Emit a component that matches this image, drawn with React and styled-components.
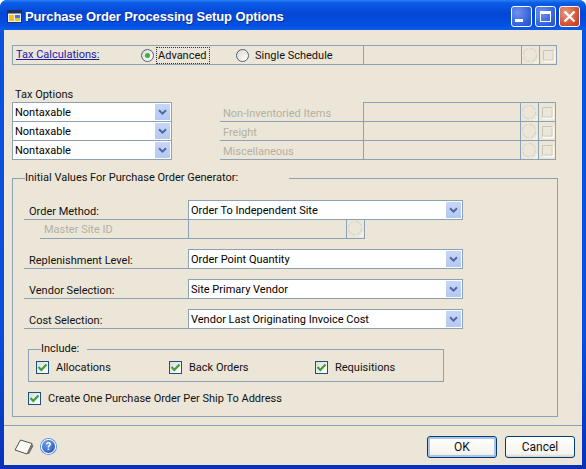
import styled, { createGlobalStyle } from 'styled-components'

const GlobalStyle = createGlobalStyle`
  html, body {
    margin: 0;
    padding: 0;
    background: #fff;
  }
  * {
    box-sizing: border-box;
  }
`

const LINE = '#8aa2b4'
const DISABLED = '#b4b0a2'

//* Little drawings
const Chevron = () => (
  <svg width='9' height='7' viewBox='0 0 9 7'>
    <path d='M1 1.2 L4.5 4.7 L8 1.2' fill='none' stroke='#4d6a9c' strokeWidth='2' />
  </svg>
)

const LookupGlyph = () => (
  <svg width='17' height='17' viewBox='0 0 17 17'>
    <circle cx='8' cy='8' r='6.5' fill='none' stroke='#d6d2c3' strokeWidth='1' strokeDasharray='8 2' />
    <path d='M12 16 H16 V12' fill='none' stroke='#fbfaf5' strokeWidth='1' />
  </svg>
)

const NoteGlyph = () => (
  <svg width='15' height='15' viewBox='0 0 15 15'>
    <path d='M2.5 12.5 V2.5 H12.5' fill='none' stroke='#c9c5b6' strokeWidth='1' />
    <path d='M2.5 13.5 H13.5 V2.5' fill='none' stroke='#fbfaf5' strokeWidth='1.4' />
    <path d='M3.5 12 H12 V3.5' fill='none' stroke='#d2cebf' strokeWidth='1' />
  </svg>
)

const Tick = () => (
  <svg width='11' height='9' viewBox='0 0 11 9'>
    <path d='M1.5 4 L4.3 7 L9.5 1.5' fill='none' stroke='#3f9c3f' strokeWidth='2.2' />
  </svg>
)

const AppIcon = () => (
  <svg width='15' height='13' viewBox='0 0 15 13'>
    <rect x='0.5' y='0.5' width='14' height='12' fill='#eef1f4' stroke='#26304f' />
    <rect x='0.5' y='0.5' width='14' height='3' fill='#26304f' />
    <rect x='2' y='5' width='5' height='6' fill='#f3c317' />
    <rect x='8' y='5' width='5' height='3' fill='#3f78d8' />
    <rect x='8' y='8' width='5' height='3' fill='#f3c317' />
  </svg>
)

const NotePad = () => (
  <svg width='20' height='16' viewBox='0 0 20 16'>
    <path d='M1 11 L6.5 1 L18 4.5 L13 15 Z' fill='#fbfbf6' stroke='#55544c' strokeWidth='1' />
    <path d='M13 15 L18 4.5 L19.5 7 L15 15 Z' fill='#77766c' />
  </svg>
)

//* Small parts
const Combo = ({ children }) => (
  <ComboBox>
    <ComboText>{children}</ComboText>
    <ArrowButton>
      <Chevron />
    </ArrowButton>
  </ComboBox>
)

const Check = ({ children }) => (
  <CheckLabel>
    <CheckBox>
      <Tick />
    </CheckBox>
    {children}
  </CheckLabel>
)

const DisabledRow = ({ children }) => (
  <OptionRow>
    <OptionLabel>{children}</OptionLabel>
    <OptionBox $framed>
      <LookupCell>
        <LookupGlyph />
      </LookupCell>
      <NoteCell>
        <NoteGlyph />
      </NoteCell>
    </OptionBox>
  </OptionRow>
)

const App = () => {
  return (
    <>
      <GlobalStyle />
      <Window>
        <TitleBar>
          <AppIcon />
          <TitleText>Purchase Order Processing Setup Options</TitleText>
          <WindowButtons>
            <WindowButton>
              <MinimizeMark />
            </WindowButton>
            <WindowButton>
              <MaximizeMark />
            </WindowButton>
            <WindowButton $close>
              <svg width='13' height='13' viewBox='0 0 13 13'>
                <path d='M1.5 1.5 L11.5 11.5 M11.5 1.5 L1.5 11.5' stroke='#fff' strokeWidth='2.4' />
              </svg>
            </WindowButton>
          </WindowButtons>
        </TitleBar>
        <Client>
          <TaxCalcRow>
            <TaxCalcLink>Tax Calculations:</TaxCalcLink>
            <RadioGroup>
              <RadioLabel>
                <Radio $checked />
                <FocusText>Advanced</FocusText>
              </RadioLabel>
              <RadioLabel $second>
                <Radio />
                <PlainText>Single Schedule</PlainText>
              </RadioLabel>
            </RadioGroup>
            <OptionBox>
              <LookupCell>
                <LookupGlyph />
              </LookupCell>
              <NoteCell>
                <NoteGlyph />
              </NoteCell>
            </OptionBox>
          </TaxCalcRow>

          <TaxOptions>
            <TaxColumn>
              <TaxHeading>Tax Options</TaxHeading>
              <Combo>Nontaxable</Combo>
              <Combo>Nontaxable</Combo>
              <Combo>Nontaxable</Combo>
            </TaxColumn>
            <TaxRight>
              <DisabledRow>Non-Inventoried Items</DisabledRow>
              <DisabledRow>Freight</DisabledRow>
              <DisabledRow>Miscellaneous</DisabledRow>
            </TaxRight>
          </TaxOptions>

          <Group>
            <GroupLegend>Initial Values For Purchase Order Generator:</GroupLegend>
            <FormRow>
              <FormLabel>Order Method:</FormLabel>
              <Combo>Order To Independent Site</Combo>
            </FormRow>
            <MasterRow>
              <MasterLabel>Master Site ID</MasterLabel>
              <MasterBox>
                <LookupCell>
                  <LookupGlyph />
                </LookupCell>
              </MasterBox>
            </MasterRow>
            <FormRow $spaced>
              <FormLabel>Replenishment Level:</FormLabel>
              <Combo>Order Point Quantity</Combo>
            </FormRow>
            <FormRow $spaced>
              <FormLabel>Vendor Selection:</FormLabel>
              <Combo>Site Primary Vendor</Combo>
            </FormRow>
            <FormRow $spaced>
              <FormLabel>Cost Selection:</FormLabel>
              <Combo>Vendor Last Originating Invoice Cost</Combo>
            </FormRow>
            <IncludeGroup>
              <IncludeLegend>Include:</IncludeLegend>
              <IncludeRow>
                <Check>Allocations</Check>
                <Check>Back Orders</Check>
                <Check>Requisitions</Check>
              </IncludeRow>
            </IncludeGroup>
            <CreateRow>
              <Check>Create One Purchase Order Per Ship To Address</Check>
            </CreateRow>
          </Group>

          <Footer>
            <FooterIcons>
              <NotePad />
              <HelpIcon>?</HelpIcon>
            </FooterIcons>
            <FooterButtons>
              <DialogButton $default>OK</DialogButton>
              <DialogButton>Cancel</DialogButton>
            </FooterButtons>
          </Footer>
        </Client>
      </Window>
    </>
  )
}

const Window = styled.div`
  width: 586px;
  height: 469px;
  display: flex;
  flex-direction: column;
  overflow: hidden;
  border-radius: 7px 7px 0 0;
  background: linear-gradient(180deg, #0a52e0 0%, #0a4fdc 70%, #0831b8 100%);
  font-family: Roboto, 'Liberation Sans', Arial, sans-serif;
  font-size: 11px;
  color: #111;
`
const TitleBar = styled.div`
  height: 30px;
  flex: none;
  display: flex;
  align-items: center;
  padding: 2px 6px 0 7px;
  background: linear-gradient(180deg, #2a7ff0 0%, #0a5ce6 10%, #0346d6 45%, #0550e2 85%, #0a5ee8 100%);
`
const TitleText = styled.div`
  margin-left: 3px;
  color: #fff;
  font-family: 'Liberation Sans', Arial, sans-serif;
  font-size: 13px;
  font-weight: 700;
  letter-spacing: -0.13px;
  white-space: nowrap;
  text-shadow: 1px 1px 0 #0a2f9c;
`
const WindowButtons = styled.div`
  margin-left: auto;
  display: flex;
  gap: 3px;
`
const WindowButton = styled.div`
  width: 21px;
  height: 21px;
  display: flex;
  align-items: center;
  justify-content: center;
  border: 1px solid #fff;
  border-radius: 3px;
  background: ${(props) =>
    props.$close
      ? 'radial-gradient(circle at 30% 30%, #e8987c, #d4492b 70%, #b93a1e)'
      : 'radial-gradient(circle at 30% 30%, #6f93ec, #2f5fdc 70%, #2350c8)'};
`
const MinimizeMark = styled.div`
  width: 8px;
  height: 3px;
  background: #fff;
  margin: 8px 5px 0 0;
`
const MaximizeMark = styled.div`
  width: 11px;
  height: 11px;
  border: 1px solid #fff;
  border-top-width: 3px;
`
const Client = styled.div`
  flex: none;
  height: 435px;
  margin: 0 4px;
  padding: 15px 0 0 8px;
  background: #ece6d8;
  display: flex;
  flex-direction: column;
`
const TaxCalcRow = styled.div`
  width: 545px;
  height: 20px;
  display: flex;
  border: 1px solid ${LINE};
`
const TaxCalcLink = styled.a`
  width: 128px;
  padding: 2px 0 0 3px;
  color: #1a1aa6;
  text-decoration: underline;
`
const RadioGroup = styled.div`
  width: 222px;
  display: flex;
  align-items: center;
`
const RadioLabel = styled.div`
  display: flex;
  align-items: center;
  gap: 3px;
  margin-left: ${(props) => (props.$second ? '27px' : '0')};
`
const Radio = styled.span`
  width: 13px;
  height: 13px;
  border-radius: 50%;
  border: 1px solid #4d6185;
  display: flex;
  align-items: center;
  justify-content: center;
  background: linear-gradient(135deg, #dcd8ca, #fff);
  &::after {
    content: '';
    display: ${(props) => (props.$checked ? 'block' : 'none')};
    width: 5px;
    height: 5px;
    border-radius: 50%;
    background: #3fae3f;
  }
`
const FocusText = styled.span`
  width: 52px;
  padding: 1px 0 1px 1px;
  outline: 1px dotted #333;
  white-space: nowrap;
`
const PlainText = styled.span`
  margin-left: 3px;
  white-space: nowrap;
`
const OptionBox = styled.div`
  flex: 1;
  display: flex;
  justify-content: flex-end;
  border-left: 1px solid ${LINE};
  ${(props) =>
    props.$framed &&
    `
    border: 1px solid ${LINE};
  `}
`
const LookupCell = styled.div`
  width: 18px;
  display: flex;
  align-items: center;
  justify-content: center;
  border-left: 1px solid ${LINE};
`
const NoteCell = styled.div`
  width: 17px;
  display: flex;
  align-items: center;
  justify-content: center;
  border-left: 1px solid ${LINE};
`
const TaxOptions = styled.div`
  width: 545px;
  margin-top: 22px;
  display: flex;
  align-items: flex-end;
`
const TaxColumn = styled.div`
  width: 160px;
  flex: none;
`
const TaxHeading = styled.div`
  height: 15px;
  padding: 1px 0 0 3px;
`
const ComboBox = styled.div`
  height: 20px;
  display: flex;
  align-items: center;
  border: 1px solid ${LINE};
  background: #fff;
  & + & {
    margin-top: -1px;
  }
`
const ComboText = styled.div`
  flex: 1;
  padding-left: 2px;
  color: #000;
  white-space: nowrap;
`
const ArrowButton = styled.div`
  width: 15px;
  height: 16px;
  margin-right: 1px;
  display: flex;
  align-items: center;
  justify-content: center;
  background: linear-gradient(180deg, #c6d6f8, #b4c8f2);
`
const TaxRight = styled.div`
  width: 336px;
  margin-left: 48px;
  flex: none;
`
const OptionRow = styled.div`
  height: 20px;
  display: flex;
  & + & {
    margin-top: -1px;
  }
`
const OptionLabel = styled.div`
  width: 143px;
  flex: none;
  padding: 5px 0 0 3px;
  color: ${DISABLED};
  border-bottom: 1px solid ${LINE};
  white-space: nowrap;
`
const Group = styled.fieldset`
  width: 546px;
  height: 246px;
  margin: 11px 0 0;
  padding: 15px 0 0 11px;
  min-width: 0;
  border: 1px solid ${LINE};
`
const GroupLegend = styled.legend`
  margin-left: 1px;
  padding: 0 51px 0 0;
  height: 14px;
`
const FormRow = styled.div`
  width: 439px;
  height: 20px;
  display: flex;
  margin-top: ${(props) => (props.$spaced ? '10px' : '0')};
  ${ComboBox} {
    width: 275px;
    flex: none;
  }
`
const FormLabel = styled.div`
  width: 164px;
  flex: none;
  padding: 5px 0 0 5px;
  border-bottom: 1px solid ${LINE};
`
const MasterRow = styled.div`
  width: 325px;
  height: 20px;
  margin: -1px 0 0 16px;
  display: flex;
`
const MasterLabel = styled.div`
  width: 148px;
  flex: none;
  padding: 4px 0 0 4px;
  color: ${DISABLED};
  border-bottom: 1px solid ${LINE};
`
const MasterBox = styled.div`
  flex: 1;
  display: flex;
  justify-content: flex-end;
  border: 1px solid ${LINE};
  border-top: none;
`
const IncludeGroup = styled.fieldset`
  width: 416px;
  height: 40px;
  margin: 13px 0 0 4px;
  padding: 5px 0 0 7px;
  min-width: 0;
  border: 1px solid ${LINE};
`
const IncludeLegend = styled.legend`
  margin-left: 5px;
  padding: 0 8px 0 0;
  height: 14px;
`
const IncludeRow = styled.div`
  display: grid;
  grid-template-columns: 133px 146px 1fr;
`
const CheckLabel = styled.div`
  display: flex;
  align-items: center;
  gap: 7px;
  white-space: nowrap;
`
const CheckBox = styled.span`
  width: 13px;
  height: 13px;
  display: flex;
  align-items: center;
  justify-content: center;
  border: 1px solid #1c5180;
  background: linear-gradient(135deg, #dcdcd7, #fff);
`
const CreateRow = styled.div`
  margin: 10px 0 0 4px;
`
const Footer = styled.div`
  height: 40px;
  margin: auto 0 0 -8px;
  padding: 2px 0 0 10px;
  display: flex;
  align-items: center;
  justify-content: space-between;
  border-top: 1px solid ${LINE};
`
const FooterIcons = styled.div`
  display: flex;
  align-items: center;
  gap: 7px;
`
const HelpIcon = styled.div`
  width: 15px;
  height: 15px;
  display: flex;
  align-items: center;
  justify-content: center;
  border-radius: 50%;
  border: 1px solid #fff;
  box-shadow: 0 0 0 1px #5f8fdc;
  background: radial-gradient(circle at 35% 30%, #6a9ae8, #1c4fb8);
  color: #fff;
  font-size: 11px;
  font-weight: 700;
`
const FooterButtons = styled.div`
  display: flex;
  gap: 8px;
  padding-right: 7px;
`
const DialogButton = styled.div`
  width: 70px;
  height: 22px;
  display: flex;
  align-items: center;
  justify-content: center;
  border: 1px solid #003c74;
  border-radius: 3px;
  color: #111;
  font-size: 12px;
  background: linear-gradient(180deg, #fff, #f4f3ec 85%, #d6d0c5);
  box-shadow: ${(props) => (props.$default ? 'inset 0 0 0 2px #a9c4ea' : 'none')};
`

export default App
